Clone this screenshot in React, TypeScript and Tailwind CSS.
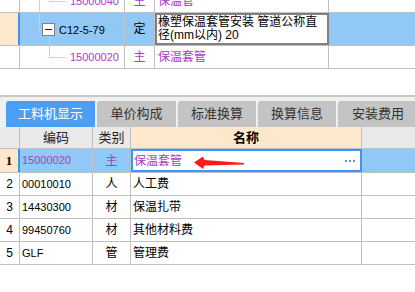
import React from "react";

const purple = "text-[#a83cc3]";

const rows = [
  { no: "2", code: "00010010", kind: "人", name: "人工费" },
  { no: "3", code: "14430300", kind: "材", name: "保温扎带" },
  { no: "4", code: "99450760", kind: "材", name: "其他材料费" },
  { no: "5", code: "GLF", kind: "管", name: "管理费" },
];

const tabs = [
  { label: "工料机显示", w: "w-[89px]", active: true },
  { label: "单价构成", w: "w-[79px]" },
  { label: "标准换算", w: "w-[78px]" },
  { label: "换算信息", w: "w-[78px]" },
  { label: "安装费用", w: "w-[80px]" },
];

const Line: React.FC<{ className: string }> = ({ className }) => (
  <span className={`absolute bg-[#ffc980] ${className}`} />
);

const TreeTable: React.FC = () => (
  <div className="h-[95px] overflow-hidden">
    <div className="-mt-[10px]">
      {/* partial row above, cut by the top edge */}
      <div className="flex h-[23px] border-b border-[#c0c0c0]">
        <div className="w-[20px] border-r border-[#c0c0c0]" />
        <div className={`relative flex w-[105px] items-center border-r border-[#c0c0c0] pl-[50px] text-[11px] ${purple}`}>
          <Line className="left-[19px] top-0 h-full w-px" />
          <Line className="left-[29px] top-0 h-[11px] w-px" />
          <Line className="left-[29px] top-[11px] h-px w-[16px]" />
          15000040
        </div>
        <div className={`flex w-[30px] items-center justify-center border-r border-[#c0c0c0] text-[12px] ${purple}`}>主</div>
        <div className={`flex w-[174px] items-center border-r border-[#c0c0c0] pl-[3px] text-[12px] ${purple}`}>保温管</div>
        <div className="flex-1" />
      </div>

      {/* selected row */}
      <div className="flex h-[33px] border-b border-[#c0c0c0] bg-[#92c8f6]">
        <div className="w-[20px] border-r-2 border-[#3f93f2] bg-[#fde8cb]" />
        <div className="relative flex w-[105px] items-center border-r border-[#c0c0c0] pl-[39px] pt-[2px] text-[11px] text-black">
          <Line className="left-[19px] top-0 h-[16px] w-px" />
          <Line className="left-[19px] top-[16px] h-px w-[3px]" />
          <Line className="left-[29px] top-[23px] h-[10px] w-px" />
          <span className="absolute left-[22px] top-[10px] flex h-[13px] w-[13px] items-center justify-center border border-[#808080] bg-white">
            <span className="h-px w-[7px] bg-[#222]" />
          </span>
          C12-5-79
        </div>
        <div className="flex w-[30px] items-center justify-center border-r border-[#c0c0c0] text-[12px] text-black">定</div>
        <div className="flex w-[174px] flex-col justify-center border-2 border-[#808080] bg-white pl-[1px] text-[12px] leading-[13px] text-black">
          <span className="whitespace-nowrap">橡塑保温套管安装 管道公称直</span>
          <span className="whitespace-nowrap">径(mm以内) 20</span>
        </div>
        <div className="flex-1" />
      </div>

      {/* child row */}
      <div className="flex h-[23px] border-b border-[#c0c0c0]">
        <div className="w-[20px] border-r border-[#c0c0c0]" />
        <div className={`relative flex w-[105px] items-center border-r border-[#c0c0c0] pl-[50px] text-[11px] ${purple}`}>
          <Line className="left-[29px] top-0 h-[11px] w-px" />
          <Line className="left-[29px] top-[11px] h-px w-[16px]" />
          15000020
        </div>
        <div className={`flex w-[30px] items-center justify-center border-r border-[#c0c0c0] text-[12px] ${purple}`}>主</div>
        <div className={`flex w-[174px] items-center border-r border-[#c0c0c0] pl-[3px] text-[12px] ${purple}`}>保温套管</div>
        <div className="flex-1" />
      </div>
    </div>
  </div>
);

const Arrow: React.FC = () => (
  <svg className="pointer-events-none absolute left-[-2px] top-[-2px]" width="231" height="24" viewBox="0 0 231 24">
    <polygon points="63,13.5 72,7.5 73.5,11 113,14 113,15.5 73.5,16.5 72,20" fill="#ff1a1a" />
  </svg>
);

const App: React.FC = () => {
  return (
    <div className="h-[292px] w-[415px] overflow-hidden bg-white font-['Liberation_Sans','Noto_Sans_CJK_SC',sans-serif]">
      <TreeTable />
      <div className="h-[2px] bg-[#c8c8c8]" />

      {/* tabs */}
      <div className="flex h-[30px] items-end gap-[2px] bg-[#f0f0f0] pl-[6px]">
        {tabs.map((t) => (
          <div
            key={t.label}
            className={`flex h-[26px] shrink-0 items-center justify-center rounded-tl-[3px] text-[13px] ${t.w} ${
              t.active ? "bg-[#4a9ff5] text-white" : "bg-[#c4c4c4] text-[#333]"
            }`}
          >
            {t.label}
          </div>
        ))}
      </div>

      {/* header */}
      <div className="flex h-[22px] border-b border-[#c0c0c0] bg-[#e9e9e9] text-[13px] text-[#222]">
        <div className="w-[20px] border-r border-[#c0c0c0]" />
        <div className="flex w-[73px] items-center justify-center border-r border-[#c0c0c0]">编码</div>
        <div className="flex w-[38px] items-center justify-center border-r border-[#c0c0c0]">类别</div>
        <div className="flex w-[231px] items-center justify-center border-r border-[#c0c0c0] bg-[#fde8cb] font-bold text-black">名称</div>
        <div className="flex-1" />
      </div>

      {/* selected row */}
      <div className="flex h-[24px] border-b border-[#c0c0c0] bg-[#92c8f6]">
        <div className="flex w-[20px] items-center justify-center border-r-2 border-[#3f93f2] bg-[#fde8cb] font-['Liberation_Serif',serif] text-[13px] font-bold text-black">1</div>
        <div className={`flex w-[73px] items-center border-r border-[#c0c0c0] pl-[2px] text-[11px] ${purple}`}>15000020</div>
        <div className={`flex w-[38px] items-center justify-center border-r border-[#c0c0c0] text-[12px] ${purple}`}>主</div>
        <div className={`relative flex w-[231px] items-center justify-between border-2 border-[#3f93f2] bg-white pl-[1px] pr-[5px] text-[12px] ${purple}`}>
          <span>保温套管</span>
          <span className="flex gap-[2px]">
            <span className="h-[2px] w-[2px] bg-[#5c90cf]" />
            <span className="h-[2px] w-[2px] bg-[#5c90cf]" />
            <span className="h-[2px] w-[2px] bg-[#5c90cf]" />
          </span>
          <Arrow />
        </div>
        <div className="flex-1" />
      </div>

      {rows.map((r) => (
        <div key={r.no} className="flex h-[23px] border-b border-[#c0c0c0] text-black">
          <div className="flex w-[20px] items-center justify-center border-r border-[#c0c0c0] text-[12px]">{r.no}</div>
          <div className="flex w-[73px] items-center border-r border-[#c0c0c0] pl-[2px] text-[11px]">{r.code}</div>
          <div className="flex w-[38px] items-center justify-center border-r border-[#c0c0c0] text-[12px]">{r.kind}</div>
          <div className="flex w-[231px] items-center border-r border-[#c0c0c0] pl-[2px] text-[12px]">{r.name}</div>
          <div className="flex-1" />
        </div>
      ))}
    </div>
  );
};

export default App;
